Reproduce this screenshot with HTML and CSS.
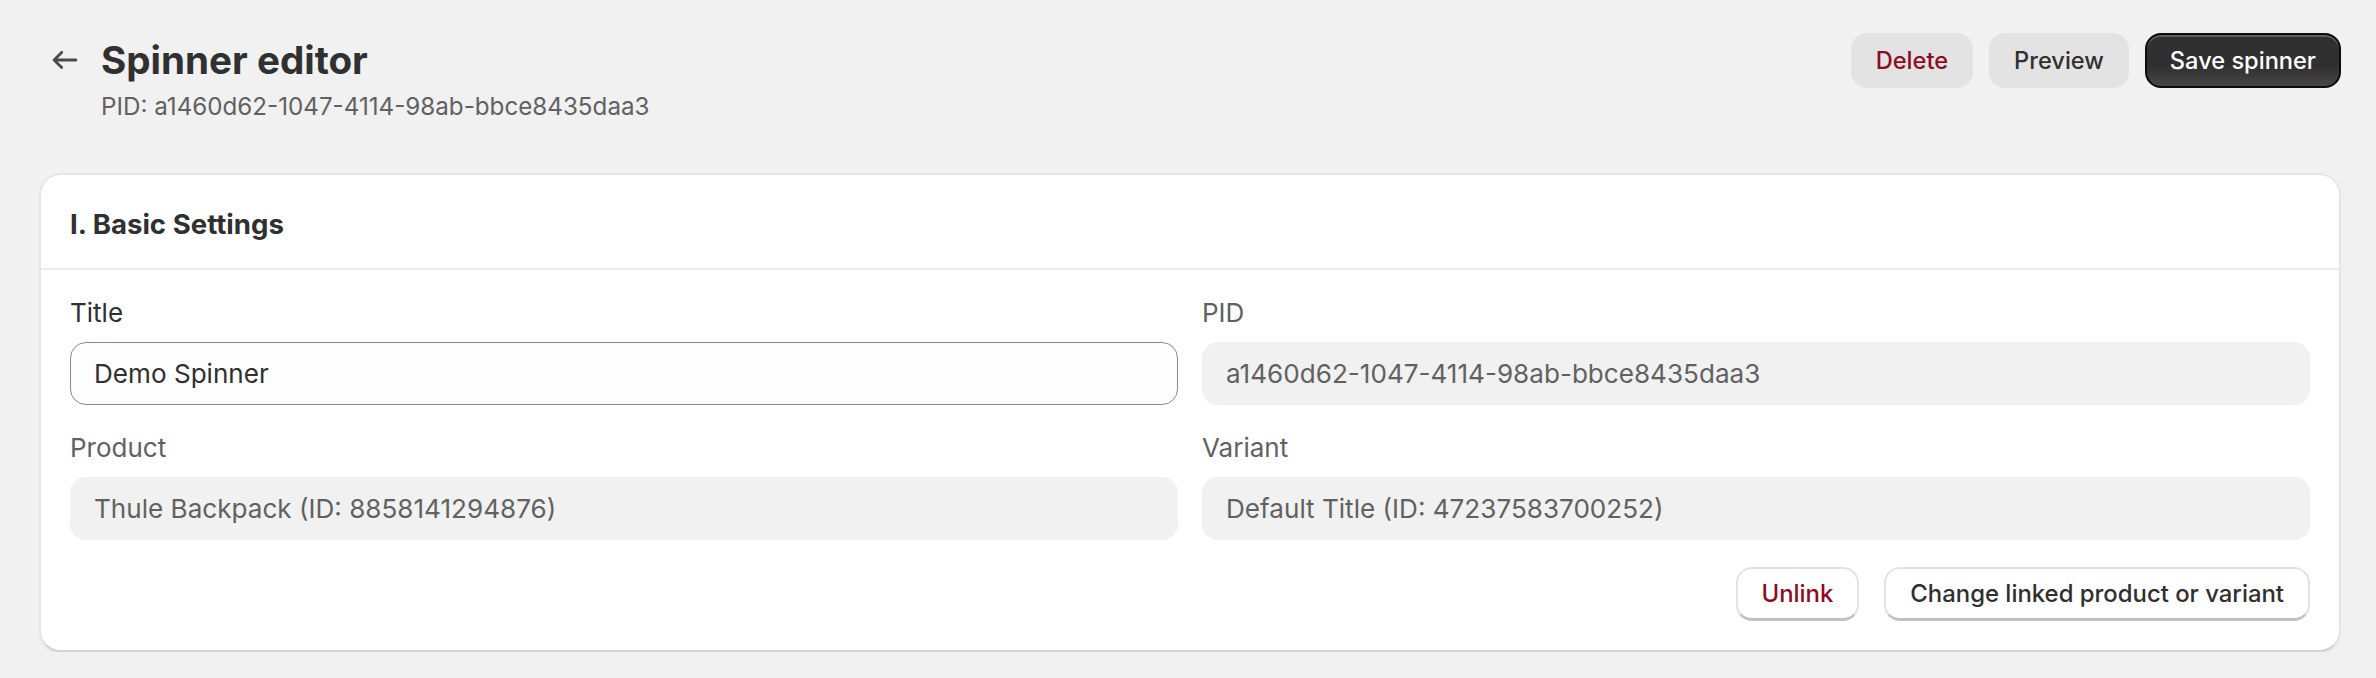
FILE: index.html
```html
<!DOCTYPE html>
<html lang="en">
<head>
<meta charset="utf-8">
<title>Spinner editor</title>
<link rel="stylesheet" href="styles.css">
</head>
<body>
<div class="page">
  <header class="page-header">
    <div class="header-left">
      <button class="back" type="button" aria-label="Back">
        <svg viewBox="0 0 20 20" width="38" height="38" aria-hidden="true"><path fill="currentColor" d="M16.5 10a.75.75 0 0 1-.75.75h-9.69l2.72 2.72a.75.75 0 0 1-1.06 1.06l-4-4a.75.75 0 0 1 0-1.06l4-4a.75.75 0 1 1 1.06 1.06l-2.72 2.72h9.69a.75.75 0 0 1 .75.75"/></svg>
      </button>
      <div class="titles">
        <h1 class="page-title">Spinner editor</h1>
        <div class="page-subtitle">PID: a1460d62-1047-4114-98ab-bbce8435daa3</div>
      </div>
    </div>
    <div class="header-actions">
      <button class="btn btn-tonal btn-critical" type="button">Delete</button>
      <button class="btn btn-tonal" type="button">Preview</button>
      <button class="btn btn-primary" type="button">Save spinner</button>
    </div>
  </header>

  <section class="card">
    <div class="card-header">
      <h2 class="card-title">I. Basic Settings</h2>
    </div>
    <div class="card-body">
      <div class="fields">
        <div class="field">
          <label class="field-label">Title</label>
          <div class="input input-editable">Demo Spinner</div>
        </div>
        <div class="field">
          <label class="field-label field-label-muted">PID</label>
          <div class="input input-readonly">a1460d62-1047-4114-98ab-bbce8435daa3</div>
        </div>
        <div class="field">
          <label class="field-label field-label-muted">Product</label>
          <div class="input input-readonly">Thule Backpack (ID: 8858141294876)</div>
        </div>
        <div class="field">
          <label class="field-label field-label-muted">Variant</label>
          <div class="input input-readonly">Default Title (ID: 47237583700252)</div>
        </div>
      </div>
      <div class="card-actions">
        <button class="btn btn-outline btn-critical" type="button">Unlink</button>
        <button class="btn btn-outline" type="button">Change linked product or variant</button>
      </div>
    </div>
  </section>
</div>
</body>
</html>
```
FILE: styles.css
```css
* { box-sizing: border-box; }

body {
  margin: 0;
  background: #f1f1f1;
  color: #303030;
  font-family: Inter, "Noto Sans", "Liberation Sans", sans-serif;
}

.page {
  padding: 33px 35px 0 39px;
}

.page-header {
  display: flex;
  justify-content: space-between;
  align-items: flex-start;
}

.header-left {
  display: flex;
  align-items: flex-start;
  padding-left: 7px;
}

.back {
  display: flex;
  padding: 0;
  margin: 8px 17px 0 0;
  border: 0;
  background: none;
  color: #4a4a4a;
  width: 38px;
  height: 38px;
}

.titles {
  margin-top: 3px;
}

.page-title {
  margin: 0;
  font-size: 38.6px;
  line-height: 48px;
  font-weight: 700;
  color: #303030;
}

.page-subtitle {
  margin-top: 7px;
  font-size: 24.2px;
  line-height: 32px;
  color: #616161;
}

.header-actions {
  display: flex;
  gap: 16px;
}

.btn {
  display: flex;
  align-items: center;
  justify-content: center;
  height: 55px;
  padding: 0 25px;
  border: 0;
  border-radius: 16px;
  font-family: inherit;
  font-size: 23.6px;
  font-weight: 550;
  color: #303030;
  white-space: nowrap;
}

.btn-tonal {
  background: #e3e3e3;
}

.btn-critical {
  color: #8e0b21;
}

.btn-primary {
  background: linear-gradient(180deg, #303030 62%, #474747 100%);
  color: #ffffff;
  border: 2px solid #0c0c0c;
  box-shadow: inset 0 2px 0 rgba(255, 255, 255, 0.22);
  padding: 0 23px;
}

.card {
  margin-top: 50px;
  background: #ffffff;
  border: 2px solid #e6e6e6;
  border-bottom-color: #d2d2d2;
  border-radius: 22px;
  box-shadow: 0 2px 1px rgba(0, 0, 0, 0.06);
}

.card-header {
  padding: 32px 29px 27px;
  border-bottom: 2px solid #ebebeb;
}

.card-title {
  margin: 0;
  font-size: 27.6px;
  line-height: 34px;
  font-weight: 700;
  color: #303030;
}

.card-body {
  padding: 27px 29px 29px;
}

.fields {
  display: grid;
  grid-template-columns: 1fr 1fr;
  column-gap: 24px;
  row-gap: 27px;
}

.field {
  display: flex;
  flex-direction: column;
}

.field-label {
  font-size: 26px;
  line-height: 32px;
  margin-bottom: 13px;
  color: #303030;
}

.field-label-muted {
  color: #616161;
}

.input {
  display: flex;
  align-items: center;
  height: 63px;
  padding: 0 23px;
  border-radius: 16px;
  font-size: 26.1px;
  white-space: nowrap;
  overflow: hidden;
}

.input-editable {
  background: #fdfdfd;
  border: 1px solid #8a8a8a;
  color: #303030;
}

.input-readonly {
  background: #f1f1f1;
  border: 1px solid transparent;
  color: #616161;
}

.card-actions {
  display: flex;
  justify-content: flex-end;
  gap: 25px;
  margin-top: 27px;
}

.btn-outline {
  height: 54px;
  padding: 0 24px;
  font-size: 23.9px;
  background: #ffffff;
  border: 2px solid #e3e3e3;
  border-bottom: 3px solid #c2c2c2;
}
```
